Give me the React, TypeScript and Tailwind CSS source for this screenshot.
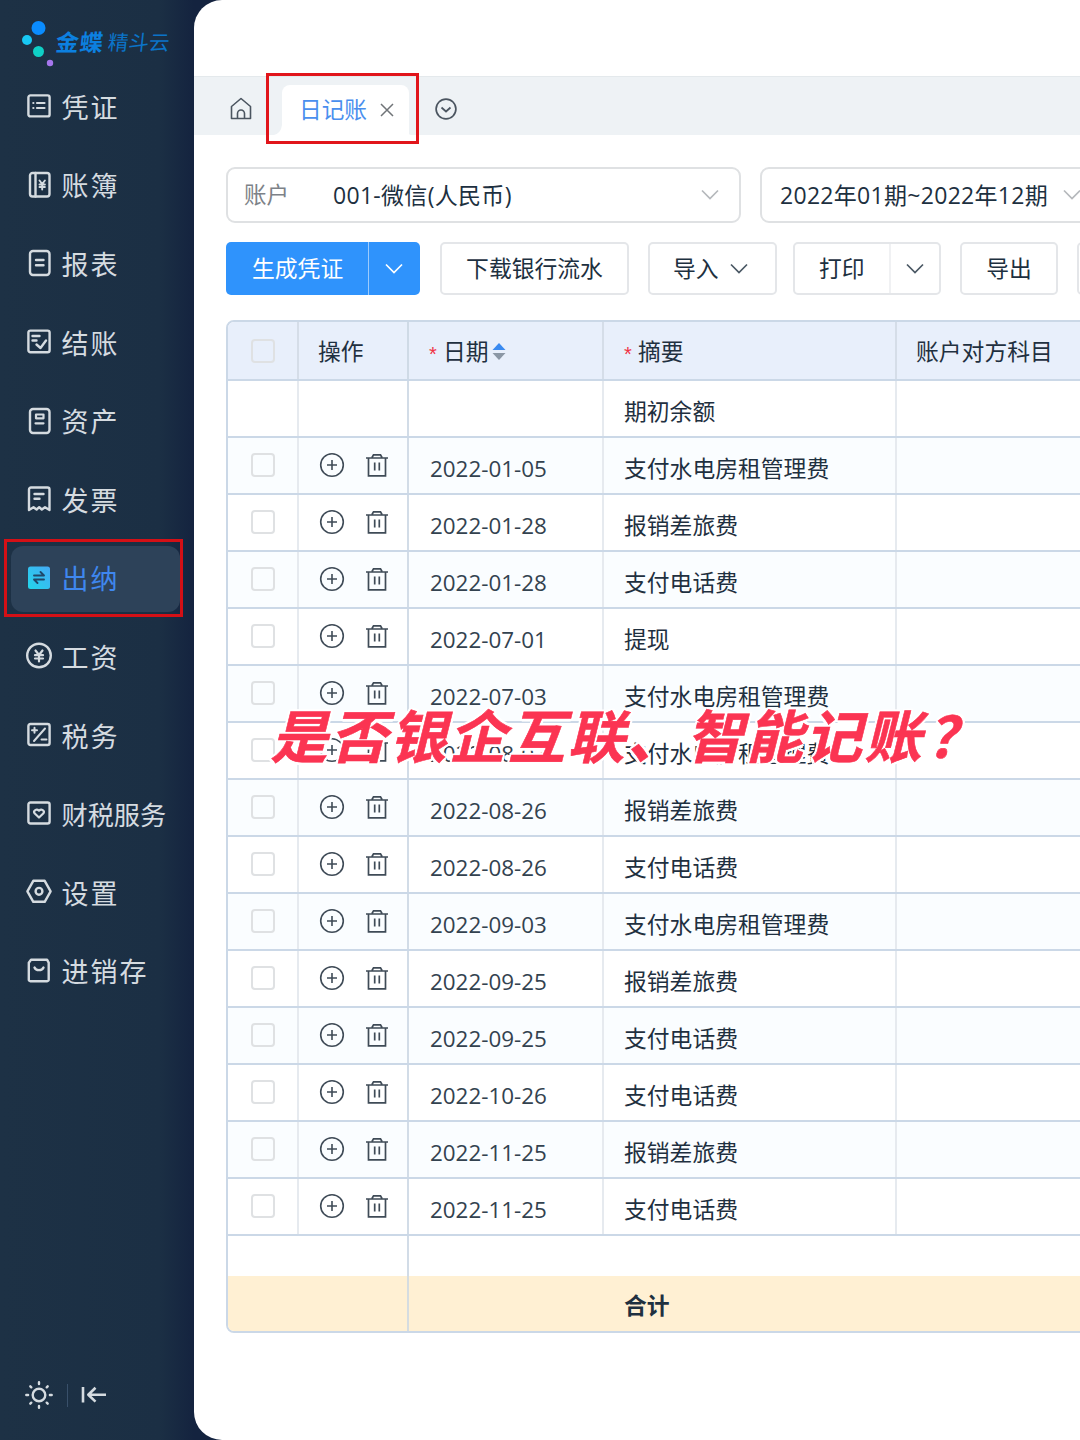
import type { ReactNode } from 'react';

const UI = "font-['Open_Sans','Noto_Sans_CJK_SC',sans-serif]";

function Icon({ children, size = 28, className = '' }: { children: ReactNode; size?: number; className?: string }) {
  return (
    <svg width={size} height={size} viewBox="0 0 28 28" fill="none" stroke="currentColor" strokeWidth="2.4" strokeLinejoin="round" strokeLinecap="round" className={`shrink-0 ${className}`}>
      {children}
    </svg>
  );
}

const nav: { label: string; icon: ReactNode; active?: boolean; tight?: boolean }[] = [
  { label: '凭证', icon: <><rect x="3.4" y="3.4" width="21.2" height="21" rx="2" /><path d="M12 11h7.500M12 16h7.500M8.300 11h.1M8.300 16h.1" strokeWidth="2.200" /></> },
  { label: '账簿', icon: <><rect x="5" y="2" width="19.500" height="23.500" rx="2.500" /><path d="M10.500 2v23.500" /><path d="M14.500 9.500l2.700 3.500 2.700-3.500M14.500 13.500h5.400M14.500 16h5.400M17.200 13v5.500" strokeWidth="1.900" /></> },
  { label: '报表', icon: <><rect x="5" y="2" width="19.500" height="24" rx="3" /><path d="M11 11h7.500M11 16.200h7.500" /></> },
  { label: '结账', icon: <><rect x="3.400" y="2.600" width="21.200" height="21.600" rx="2" /><path d="M7.500 8h7M7.500 12.500h4M11.500 16.500l4 3.500 5.500-7.500" /></> },
  { label: '资产', icon: <><rect x="5" y="2" width="19.500" height="24" rx="3" /><path d="M11 7.500h7.500v3.800H11zM10.500 16.300h8" strokeWidth="2.200" /></> },
  { label: '发票', icon: <><path d="M4 25V4.500a2 2 0 0 1 2-2h16.500a2 2 0 0 1 2 2V25l-4.500-2.800-3.200 2.300-2.600-2.300-2.600 2.300-3.100-2.300z" /><path d="M9.500 9h9M9.500 13.800h5" /></> },
  {
    label: '出纳', active: true,
    icon: <>
      <defs><linearGradient id="cash" x1="0" y1="1" x2="1" y2="0"><stop stopColor="#22d6ea" /><stop offset="1" stopColor="#45aaf6" /></linearGradient></defs>
      <rect x="3" y="2.500" width="22" height="22.500" rx="2.500" fill="url(#cash)" stroke="none" />
      <path d="M9 11.500h10l-3.500-3.500M19 15.500H9l3.500 3.500" stroke="#20486a" strokeWidth="1.900" />
    </>,
  },
  { label: '工资', icon: <><circle cx="14" cy="13.500" r="11.800" /><path d="M10.500 8.500l3.500 4.500 3.500-4.500M10 13.200h8M10 16.500h8M14 13v6.500" strokeWidth="2.200" /></> },
  { label: '税务', icon: <><rect x="3.400" y="3" width="21.200" height="21" rx="2" /><path d="M20 7.500L9 20M9.500 6.700v5M7 9.200h5M16.500 18.500h5" strokeWidth="2" /></> },
  { label: '财税服务', tight: true, icon: <><rect x="3.400" y="2.500" width="21.200" height="21" rx="2" /><path d="M14 17.500l-4.500-4.300c-1.500-2.500 2-5 4.500-2.500 2.500-2.500 6 0 4.500 2.500z" strokeWidth="2.200" /></> },
  { label: '设置', icon: <><path d="M8.300 2.800h11.400l5.900 10.500-5.900 10.500H8.300L2.400 13.300z" /><circle cx="14" cy="13.300" r="3.400" /></> },
  { label: '进销存', icon: <><path d="M6 2.700h16l1.700 3v17a1.500 1.500 0 0 1-1.500 1.500H5.300a1.500 1.500 0 0 1-1.500-1.500v-17z" /><path d="M9.500 10.500c1.500 3.500 7.500 3.500 9 0" /></> },
];

const rows: [string, string][] = [
  ['2022-01-05', '支付水电房租管理费'],
  ['2022-01-28', '报销差旅费'],
  ['2022-01-28', '支付电话费'],
  ['2022-07-01', '提现'],
  ['2022-07-03', '支付水电房租管理费'],
  ['2022-08-03', '支付水电房租管理费'],
  ['2022-08-26', '报销差旅费'],
  ['2022-08-26', '支付电话费'],
  ['2022-09-03', '支付水电房租管理费'],
  ['2022-09-25', '报销差旅费'],
  ['2022-09-25', '支付电话费'],
  ['2022-10-26', '支付电话费'],
  ['2022-11-25', '报销差旅费'],
  ['2022-11-25', '支付电话费'],
];

function Sidebar() {
  return (
    <aside className="relative flex h-full w-[194px] shrink-0 flex-col text-[#d5dbe0]">
      <div className="flex h-[68px] items-center pl-[20px]">
        <svg width="36" height="52" viewBox="0 0 36 52" className="mt-4 shrink-0">
          <circle cx="18.500" cy="12" r="7" fill="#0a8cff" />
          <circle cx="7" cy="24" r="5" fill="#18c8f4" />
          <circle cx="18.500" cy="35.500" r="5.500" fill="#0fd0c6" />
          <circle cx="30" cy="47" r="3.200" fill="#a677ee" />
        </svg>
        <div className="mt-[17px] flex -skew-x-6 items-center gap-[4px] whitespace-nowrap text-[#0c80e0]">
          <span className="text-[23px] font-bold leading-none tracking-[1px]">金蝶</span>
          <span className="text-[20.500px] leading-none text-[#0b74c8]">精斗云</span>
        </div>
      </div>
      <nav className="flex flex-col">
        {nav.map((n) => (
          <div key={n.label} className="flex h-[78.6px] items-center">
            <div className={`ml-[11px] flex h-[66px] w-[169px] items-center rounded-[12px] pl-[14px] ${n.active ? 'bg-[#2d4259] text-[#3f87ef]' : ''}`}>
              <Icon className="-mt-0.5">{n.icon}</Icon>
              <span className={`ml-[8.500px] whitespace-nowrap leading-none ${n.tight ? 'text-[26.200px]' : 'text-[27px] tracking-[2px]'}`}>{n.label}</span>
            </div>
          </div>
        ))}
      </nav>
      <div className="mb-[31px] mt-auto flex items-center pl-[25px]">
        <Icon>
          <circle cx="14" cy="14" r="6.300" />
          <path d="M14 1.300v1.800M14 24.900v1.800M1.300 14h1.800M24.900 14h1.800M5.300 5.300l1 1M21.700 21.700l1 1M5.300 22.700l1-1M21.700 6.300l1-1" />
        </Icon>
        <span className="ml-[14px] h-[23px] w-px bg-[#39506a]" />
        <Icon className="ml-[12px]"><path d="M3 6v15.500M26 13.700H9M15.500 6.800L8.300 13.700l7.200 6.900" strokeLinecap="butt" strokeWidth="2.600" /></Icon>
      </div>
      <div className="absolute left-[4px] top-[539px] h-[78px] w-[179px] border-[3px] border-[#d41016]" />
    </aside>
  );
}

function Chevron({ className = '' }: { className?: string }) {
  return (
    <svg width="20" height="12" viewBox="0 0 20 12" fill="none" stroke="currentColor" strokeWidth="1.700" className={`shrink-0 ${className}`}>
      <path d="M2 1.500l8 8 8-8" />
    </svg>
  );
}

function TabBar() {
  return (
    <div className="relative flex h-[59px] items-center border-t border-[#e4e9ec] bg-[#eef2f5] text-[#4b5560]">
      <svg width="24" height="24" viewBox="0 0 24 24" fill="none" stroke="currentColor" strokeWidth="1.600" strokeLinejoin="round" className="ml-[35px] mt-[5px]">
        <path d="M2.500 21.500V9.500L12 1.500l9.500 8v12zM8.500 21.500v-5a3.500 3.500 0 0 1 7 0v5" />
      </svg>
      <div className="ml-[29px] mt-2 flex h-[50px] w-[127px] items-center rounded-t-[8px] bg-white pl-[17px] text-[#4a8fee]">
        <span className="text-[22.700px] leading-none">日记账</span>
        <svg width="14" height="14" viewBox="0 0 14 14" fill="none" stroke="#707478" strokeWidth="1.500" className="ml-[13px]">
          <path d="M1 1l12 12M13 1L1 13" />
        </svg>
      </div>
      <svg width="24" height="24" viewBox="0 0 24 24" fill="none" stroke="currentColor" strokeWidth="1.700" className="ml-[25px] mt-[5px]">
        <circle cx="12" cy="12" r="9.900" /><path d="M7.500 10.500L12 14.500l4.500-4" />
      </svg>
      <div className="absolute -top-[4px] left-[72px] h-[71px] w-[153px] border-[3px] border-[#e1151b]">
        <svg width="147" height="10" viewBox="0 0 147 10" fill="white" className="absolute bottom-[6px] left-0">
          <path d="M5 10Q12 8 13 0v10zM142 10q-7-2-8-10v10z" />
        </svg>
      </div>
    </div>
  );
}

const btn = 'flex h-[53px] shrink-0 items-center rounded-[5px] border-2 border-[#e4e6e9] bg-white text-[#1d3040]';

function Toolbar() {
  return (
    <>
      <div className="mt-[32px] flex gap-[19px] pl-[32px] text-[23px]">
        <div className="flex h-[56px] w-[515px] shrink-0 items-center rounded-[9px] border-2 border-[#dfe1e3] pl-[16px] text-[#1d3040]">
          <span className="text-[22.500px] text-[#7d8288]">账户</span>
          <span className="ml-[44px] whitespace-nowrap tracking-[0.300px]">001-微信(人民币)</span>
          <Chevron className="ml-auto mr-[19px] text-[#b5b8bc]" />
        </div>
        <div className="flex h-[56px] w-[360px] shrink-0 items-center rounded-[9px] border-2 border-[#dfe1e3] pl-[18px] text-[#1d3040]">
          <span className="whitespace-nowrap tracking-[0.300px]">2022年01期~2022年12期</span>
          <Chevron className="ml-[14px] text-[#b5b8bc]" />
        </div>
      </div>
      <div className="mt-[19px] flex pl-[32px] text-[22.800px] leading-none">
        <div className="flex h-[53px] w-[194px] shrink-0 items-center rounded-[5px] bg-[#2f93fc] text-white">
          <span className="w-[142px] pl-[26px] pt-px">生成凭证</span>
          <span className="h-full w-px bg-[#9ccbfd]" />
          <Chevron className="ml-[15px]" />
        </div>
        <div className={`${btn} ml-[20px] w-[189px] justify-center pt-px`}>下载银行流水</div>
        <div className={`${btn} ml-[19px] w-[129px] pl-[23px] pt-px`}>导入<Chevron className="ml-[10px] text-[#4a5864]" /></div>
        <div className={`${btn} ml-[16px] w-[148px]`}>
          <span className="w-[94px] pl-[24px] pt-px">打印</span>
          <span className="h-full w-[2px] bg-[#f0f1f3]" />
          <Chevron className="ml-[14px] text-[#4a5864]" />
        </div>
        <div className={`${btn} ml-[19px] w-[98px] justify-center pt-px`}>导出</div>
        <div className={`${btn} ml-[19px] w-[98px]`} />
      </div>
    </>
  );
}

const cols = 'grid grid-cols-[71px_110px_195px_293px_300px]';
const check = <span className="h-[24px] w-[24px] rounded-[4px] border-2 border-[#dfe1e3]" />;
const required = <span className="mt-[3px] h-[19px] w-[14px] text-[20px] leading-none text-[#f03244] [font-family:'Liberation_Sans',sans-serif]">*</span>;

function RowActions() {
  return (
    <>
      <svg width="26" height="26" viewBox="0 0 26 26" fill="none" stroke="currentColor" strokeWidth="1.600">
        <circle cx="13" cy="13" r="11.300" /><path d="M13 8v10M8 13h10" />
      </svg>
      <svg width="24" height="26" viewBox="0 0 24 26" fill="none" stroke="currentColor" strokeWidth="1.700">
        <path d="M1 6h22M3.500 6v17.800h17V6M7 5.500l1.500-2.700h7L17 5.500M9.700 10.500v8M14.300 10.500v8" />
      </svg>
    </>
  );
}

function JournalTable() {
  return (
    <div className="ml-[32px] mt-[25px] w-[1000px] overflow-hidden rounded-l-[8px] border-2 border-[#cbd8e7] text-[22.800px] leading-none text-[#1f3040]">
      <div className={`${cols} h-[59px] border-b-2 border-[#cbd8e7] bg-[#e8effb]`}>
        <div className="flex items-center justify-center border-r-2 border-[#d5dde8] pl-px">{check}</div>
        <div className="flex items-center border-r-2 border-[#cfdae6] pl-[19px] pt-[3px]">操作</div>
        <div className="flex items-center border-r-2 border-[#d5dde8] pl-[20px] pt-[3px]">
          {required}日期
          <svg width="14" height="19" viewBox="0 0 14 19" className="-mt-0.5 ml-[3px]"><path d="M7 1l6.500 7H.500z" fill="#3a8af0" /><path d="M7 18l6.500-7H.500z" fill="#8b97a5" /></svg>
        </div>
        <div className="flex items-center border-r-2 border-[#d5dde8] pl-[20px] pt-[3px]">
          {required}摘要
        </div>
        <div className="flex items-center pl-[19px] pt-[3px]">账户对方科目</div>
      </div>
      <div className={`${cols} h-[57px] border-b-2 border-[#cbd8e7]`}>
        <div className="border-r-2 border-[#e6eaef]" />
        <div className="border-r-2 border-[#d2dce7]" />
        <div className="border-r-2 border-[#e6eaef]" />
        <div className="flex items-center border-r-2 border-[#e6eaef] pl-[20px] pt-[8px]">期初余额</div>
        <div />
      </div>
      {rows.map(([date, text], i) => (
        <div key={i} className={`${cols} h-[57px] border-b-2 border-[#cbd8e7] ${i % 2 ? 'bg-white' : 'bg-[#fafdff]'}`}>
          <div className="flex items-center justify-center border-r-2 border-[#e6eaef] pb-px pl-px">{check}</div>
          <div className="flex items-center gap-[20px] border-r-2 border-[#d2dce7] pb-[2px] pl-[20px] text-[#3f4b57]"><RowActions /></div>
          <div className="flex items-center border-r-2 border-[#e6eaef] pl-[21px] pt-[7px] text-[22.400px] text-[#33424f]">{date}</div>
          <div className="flex items-center border-r-2 border-[#e6eaef] pl-[20px] pt-[8px]">{text}</div>
          <div />
        </div>
      ))}
      <div className="flex h-[40px]"><div className="w-[181px] border-r-2 border-[#d2dce7]" /></div>
      <div className="flex h-[55px] items-center bg-[#fff0d3]">
        <div className="h-full w-[181px] border-r-2 border-[#d5dce0]" />
        <div className="w-[195px]" />
        <div className="pl-[20px] pt-[6px] font-bold">合计</div>
      </div>
    </div>
  );
}

export default function App() {
  return (
    <div className={`relative flex h-[1440px] w-[1080px] overflow-hidden bg-[linear-gradient(90deg,#1d3145_0px,#1b2f44_160px,#14233f_194px,#14233f_240px)] ${UI}`}>
      <Sidebar />
      <main className="min-w-0 flex-1 overflow-hidden rounded-l-[28px] bg-white">
        <div className="h-[76px]" />
        <TabBar />
        <Toolbar />
        <JournalTable />
      </main>
      <div className="absolute left-[276px] top-[702px] -skew-x-[14deg] whitespace-nowrap text-[57px] font-bold leading-[68px] tracking-[2.400px] text-[#fb3452] [-webkit-text-stroke:0.6px_#fb3452] [text-shadow:2.500px_0_#fff,-2.500px_0_#fff,0_2.500px_#fff,0_-2.500px_#fff,2px_2px_#fff,-2px_2px_#fff,2px_-2px_#fff,-2px_-2px_#fff]">
        是否银企互联、智能记账<span className="ml-[3px]">？</span>
      </div>
    </div>
  );
}
